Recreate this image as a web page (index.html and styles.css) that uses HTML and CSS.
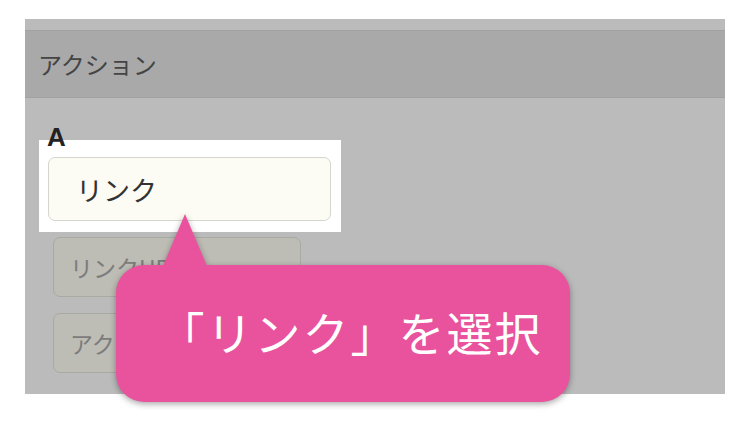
FILE: index.html
```html
<!DOCTYPE html>
<html lang="ja">
<head>
<meta charset="utf-8">
<title>アクション</title>
<link rel="stylesheet" href="styles.css">
</head>
<body>
<div class="panel">
  <div class="top-strip"></div>
  <div class="header"><span class="header-title">アクション</span></div>
  <div class="content">
    <div class="label">A</div>
    <div class="highlight">
      <div class="field">リンク</div>
    </div>
    <div class="option">リンクURL</div>
    <div class="option">アクション</div>
  </div>
  <div class="callout">「リンク」を選択</div>
</div>
</body>
</html>
```
FILE: styles.css
```css
html, body {
  margin: 0;
  padding: 0;
  background: #ffffff;
}
body {
  width: 751px;
  height: 422px;
  overflow: hidden;
  font-family: "Noto Sans CJK JP", "Noto Sans", sans-serif;
}
.panel {
  position: relative;
  margin: 19px 0 0 25px;
  width: 700px;
  height: 375px;
  background: #bbbbbb;
  display: flex;
  flex-direction: column;
}
.top-strip {
  height: 11px;
  flex: none;
}
.header {
  flex: none;
  height: 66px;
  background: #a9a9a9;
  border-top: 1px solid #a1a1a1;
  border-bottom: 1px solid #a1a1a1;
  display: flex;
  align-items: center;
  padding-left: 13px;
}
.header-title {
  font-size: 24px;
  color: #444444;
  line-height: 1;
}
.content {
  padding-top: 27px;
  display: flex;
  flex-direction: column;
  align-items: flex-start;
}
.label {
  position: relative;
  z-index: 1;
  margin-left: 22px;
  font-family: "Liberation Sans", Arial, sans-serif;
  font-weight: bold;
  font-size: 26px;
  line-height: 24px;
  color: #222222;
  margin-bottom: -9px;
}
.highlight {
  margin-left: 14px;
  width: 302px;
  box-sizing: border-box;
  background: #ffffff;
  padding: 17px 10px 11px 9px;
}
.field {
  height: 64px;
  box-sizing: border-box;
  background: #fcfcf4;
  border: 1px solid #d6d6d0;
  border-radius: 7px;
  display: flex;
  align-items: center;
  padding-left: 27px;
  font-size: 27px;
  color: #333333;
}
.option {
  margin-left: 28px;
  margin-top: 5px;
  width: 248px;
  height: 60px;
  box-sizing: border-box;
  background: #bdbdb5;
  border: 1px solid #aaaaa4;
  border-radius: 7px;
  display: flex;
  align-items: center;
  padding-left: 16px;
  font-size: 23px;
  color: #7c7c7c;
}
.option + .option {
  margin-top: 16px;
}
.callout {
  position: absolute;
  left: 91px;
  top: 246px;
  width: 454px;
  height: 137px;
  box-sizing: border-box;
  padding: 0 0 5px 15px;
  background: #e9529c;
  border-radius: 28px;
  filter: drop-shadow(0 2px 3px rgba(0, 0, 0, 0.35));
  display: flex;
  align-items: center;
  justify-content: center;
  color: #ffffff;
  font-size: 46px;
  letter-spacing: 2px;
  line-height: 1;
  z-index: 2;
}
.callout::before {
  content: "";
  position: absolute;
  left: 47px;
  top: -51px;
  width: 44px;
  height: 52px;
  background: #e9529c;
  clip-path: polygon(50% 0, 100% 100%, 0 100%);
}
```
